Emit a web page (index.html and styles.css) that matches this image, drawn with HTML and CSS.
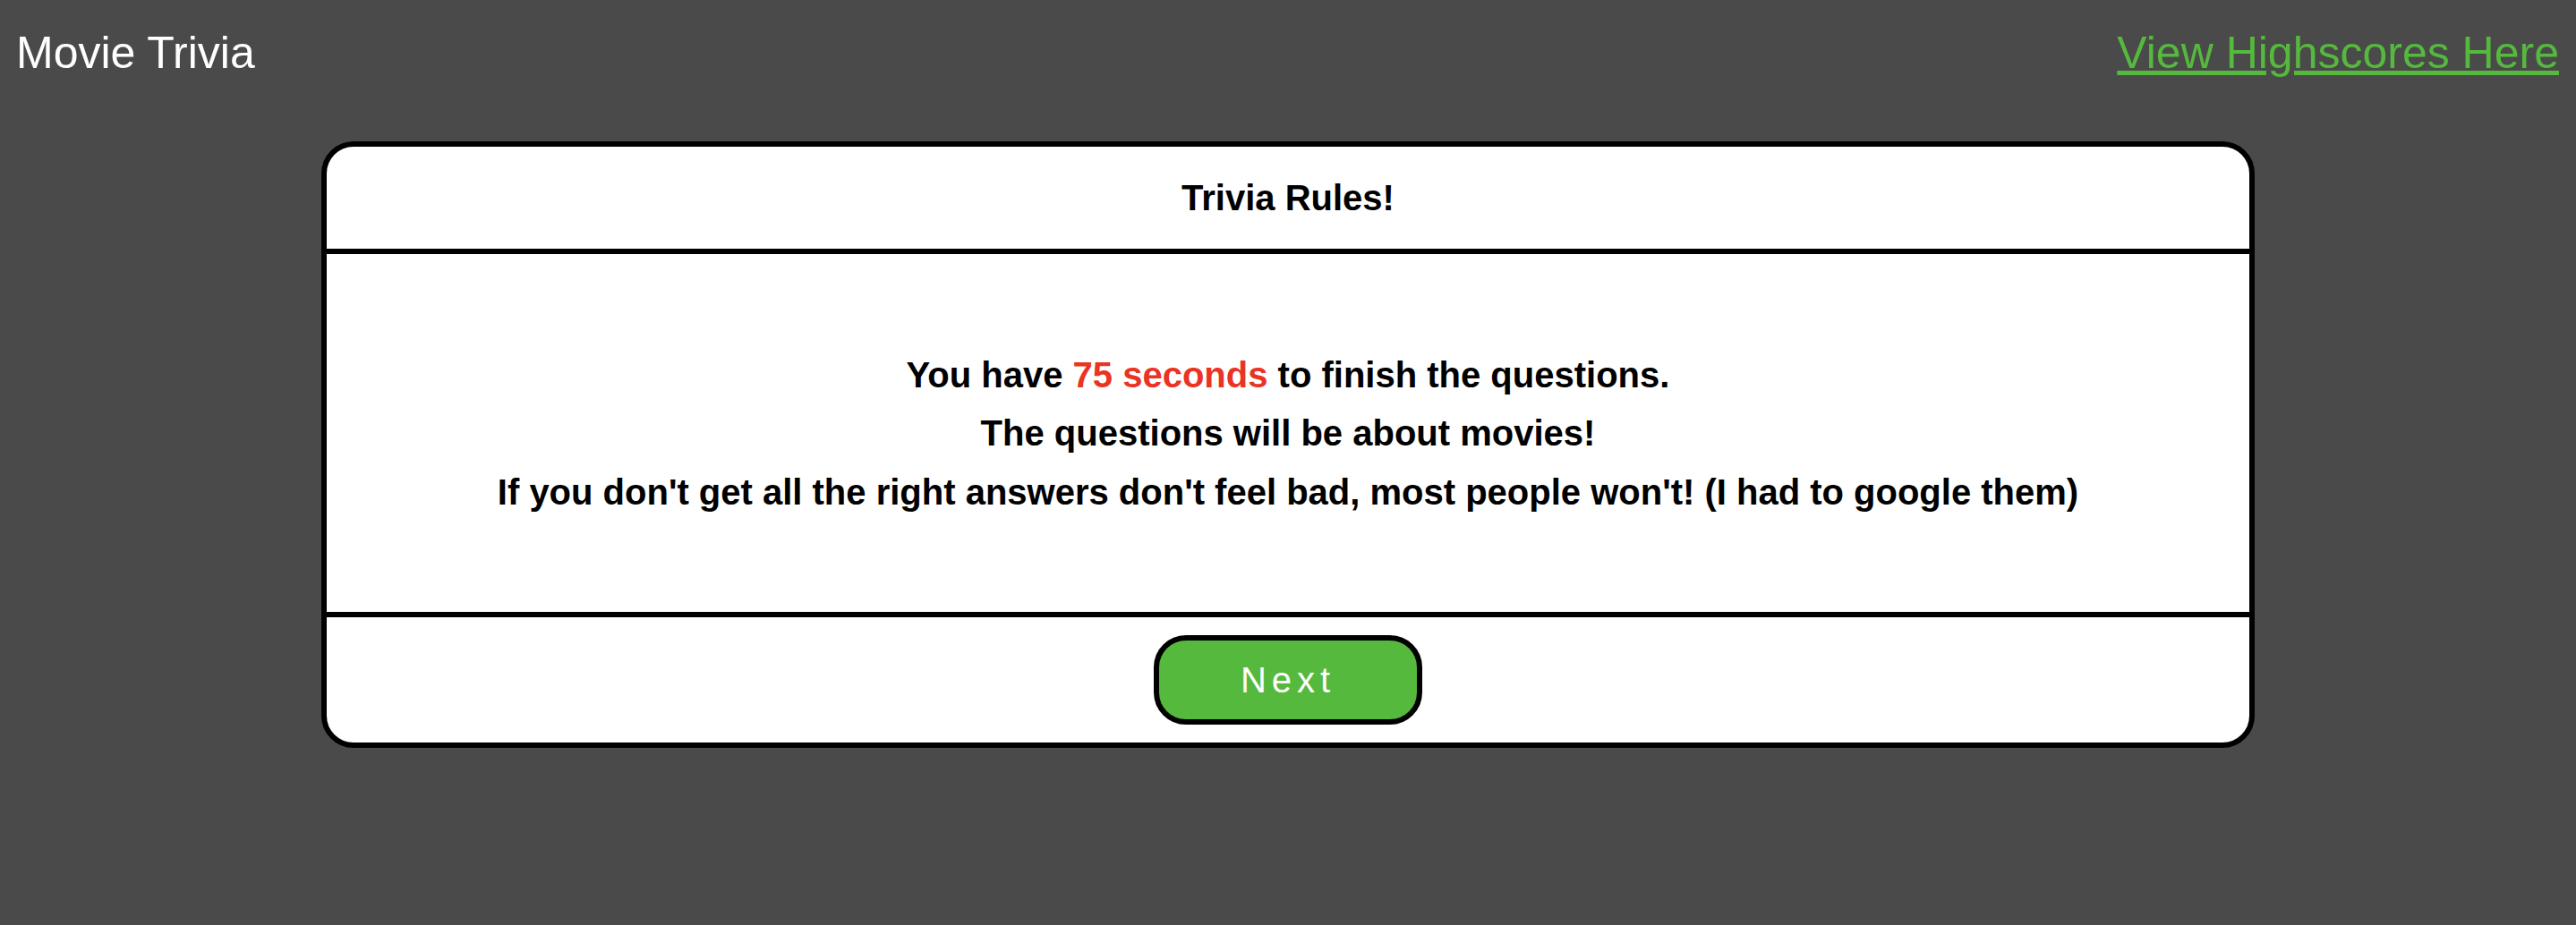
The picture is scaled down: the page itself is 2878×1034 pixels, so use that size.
FILE: index.html
```html
<!DOCTYPE html>
<html lang="en">
<head>
<meta charset="utf-8">
<title>Movie Trivia</title>
<link rel="stylesheet" href="styles.css">
</head>
<body>
  <header class="topbar">
    <div class="brand">Movie Trivia</div>
    <a class="highscores" href="#">View Highscores Here</a>
  </header>
  <main class="card">
    <div class="card-header">Trivia Rules!</div>
    <div class="card-body">
      <p class="rule">You have <span class="accent">75 seconds</span> to finish the questions.</p>
      <p class="rule">The questions will be about movies!</p>
      <p class="rule">If you don't get all the right answers don't feel bad, most people won't! (I had to google them)</p>
    </div>
    <div class="card-footer">
      <button class="next-btn" type="button">Next</button>
    </div>
  </main>
</body>
</html>
```
FILE: styles.css
```css
html, body {
  margin: 0;
  padding: 0;
}

body {
  background: #4a4a4a;
  font-family: "Liberation Sans", Arial, sans-serif;
}

.topbar {
  display: flex;
  justify-content: space-between;
  align-items: flex-start;
  padding: 31px 19px 0 18px;
  font-size: 50px;
  line-height: 57px;
}

.brand {
  color: #ffffff;
}

.highscores {
  color: #55b93d;
  text-decoration: underline;
}

.card {
  box-sizing: border-box;
  width: 2160px;
  margin: 70px auto 0;
  background: #ffffff;
  border: 6px solid #000000;
  border-radius: 36px;
  display: flex;
  flex-direction: column;
  overflow: hidden;
}

.card-header {
  height: 114px;
  display: flex;
  align-items: center;
  justify-content: center;
  font-size: 40px;
  line-height: 46px;
  font-weight: bold;
  color: #000000;
  border-bottom: 6px solid #000000;
}

.card-body {
  height: 400px;
  display: flex;
  flex-direction: column;
  align-items: center;
  justify-content: center;
  gap: 19.5px;
  border-bottom: 6px solid #000000;
}

.rule {
  margin: 0;
  font-size: 40px;
  line-height: 46px;
  font-weight: bold;
  color: #000000;
  text-align: center;
}

.accent {
  color: #ea3323;
}

.card-footer {
  height: 140px;
  display: flex;
  align-items: center;
  justify-content: center;
}

.next-btn {
  width: 300px;
  height: 100px;
  box-sizing: border-box;
  background: #55b93d;
  border: 6px solid #000000;
  border-radius: 36px;
  color: #ffffff;
  font-family: "Liberation Sans", Arial, sans-serif;
  font-size: 40px;
  letter-spacing: 6px;
  padding: 0;
  cursor: pointer;
}
```
